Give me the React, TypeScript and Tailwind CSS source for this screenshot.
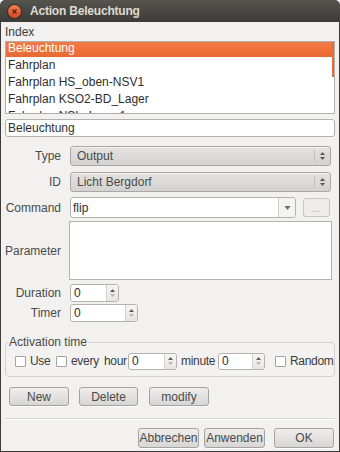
import React from "react";

const font = "font-['Liberation_Sans',Arial,sans-serif]";

function UpDown({ downDim = false }: { downDim?: boolean }) {
    return (
        <svg width="7" height="12" viewBox="0 0 7 12">
            <path d="M1 5 L3.5 2 L6 5 Z" fill="#5a5a5a" />
            <path d="M1 7 L3.5 10 L6 7 Z" fill={downDim ? "#b4b4b4" : "#5a5a5a"} />
        </svg>
    );
}

function Combo({ value }: { value: string }) {
    return (
        <div className="flex h-full items-stretch rounded-[3px] border border-[#a9a8a6] bg-gradient-to-b from-[#e4e3e1] to-[#d3d2d0] shadow-[inset_0_1px_0_#f2f2f1]">
            <div className="flex flex-1 items-center pl-[6px] text-[#4a4a48]">{value}</div>
            <div className="my-[3px] w-px bg-[#c2c1bf]" />
            <div className="flex w-[15px] items-center justify-center">
                <UpDown />
            </div>
        </div>
    );
}

function Spin({ width }: { width: string }) {
    return (
        <div className={`flex h-full ${width} shrink-0 items-stretch overflow-hidden rounded-[3px] border border-[#b3b2b0] bg-white`}>
            <div className="flex flex-1 items-center pl-[3px] text-[#2e2e2e]">0</div>
            <div className="flex w-[12px] items-center justify-center border-l border-[#d0cfcd] bg-gradient-to-b from-[#f6f6f5] to-[#e6e5e3]">
                <UpDown downDim />
            </div>
        </div>
    );
}

function Check({ label, w }: { label: string; w: string }) {
    return (
        <div className={`flex ${w} shrink-0 items-center whitespace-nowrap`}>
            <div className="h-[11px] w-[11px] shrink-0 rounded-[1px] border border-[#a3a2a0] bg-white" />
            <span className="ml-[4px]">{label}</span>
        </div>
    );
}

function Btn({ label, w }: { label: string; w: string }) {
    return (
        <div className={`flex h-full ${w} items-center justify-center rounded-[3px] border border-[#a4a3a1] bg-gradient-to-b from-[#efeeed] to-[#d7d6d4] text-[#4a4a48] shadow-[0_1px_0_#ffffff]`}>
            {label}
        </div>
    );
}

function Label({ text }: { text: string }) {
    return <div className="flex w-[56px] items-center justify-end whitespace-nowrap text-[#4a4a48]">{text}</div>;
}

export default function App() {
    const rows = ["Beleuchtung", "Fahrplan", "Fahrplan HS_oben-NSV1", "Fahrplan KSO2-BD_Lager", "Fahrplan NSL_Lager1"];

    return (
        <div className={`${font} flex h-[452px] w-[340px] flex-col overflow-hidden text-[12px] text-[#3c3c3c]`}>
            {/* title bar */}
            <div className="flex h-[22px] shrink-0 items-center rounded-t-[5px] bg-gradient-to-b from-[#55544f] to-[#3c3b37] pl-[8px]">
                <div className="flex h-[13px] w-[13px] items-center justify-center rounded-full bg-gradient-to-b from-[#f27f56] to-[#d6461d] shadow-[0_0_0_1px_#2f2e2a]">
                    <svg width="7" height="7" viewBox="0 0 7 7">
                        <path d="M1.5 1.5 L5.5 5.5 M5.5 1.5 L1.5 5.5" stroke="#5a2010" strokeWidth="1.3" />
                    </svg>
                </div>
                <span className="ml-[9px] text-[12px] font-bold tracking-[-0.2px] text-[#dfdbd2]">Action Beleuchtung</span>
            </div>

            {/* body */}
            <div className="flex flex-1 flex-col border-x border-b border-[#3c3b37] bg-[#f2f1f0] px-[4px]">
                <div className="mt-[3px] h-[14px] leading-[14px] text-[#3c3c3c]">Index</div>

                <div className="relative mt-[2px] h-[73px] shrink-0 overflow-hidden border border-[#b0afad] bg-white">
                    <div className="-mt-[2px]">
                        {rows.map((r, i) => (
                            <div
                                key={r}
                                className={`h-[17px] pl-[2px] leading-[17px] ${i === 0 ? "bg-gradient-to-b from-[#f37c4a] to-[#e9692f] text-white" : "text-[#2e2e2e]"}`}
                            >
                                {r}
                            </div>
                        ))}
                    </div>
                    <div className="absolute right-0 top-0 h-[35px] w-[2px] bg-[#ea6b35]" />
                </div>

                <div className="mt-[5px] flex h-[18px] shrink-0 items-center rounded-[3px] border border-[#b3b2b0] bg-white pl-[2px] text-[#2e2e2e]">
                    Beleuchtung
                </div>

                <div className="mt-[9px] flex h-[20px] gap-[9px]">
                    <Label text="Type" />
                    <div className="w-[261px]">
                        <Combo value="Output" />
                    </div>
                </div>
                <div className="mt-[6px] flex h-[20px] gap-[9px]">
                    <Label text="ID" />
                    <div className="w-[261px]">
                        <Combo value="Licht Bergdorf" />
                    </div>
                </div>
                <div className="mt-[5px] flex h-[21px] gap-[9px]">
                    <Label text="Command" />
                    <div className="flex w-[261px] gap-[7px]">
                        <div className="flex w-[226px] items-stretch rounded-[3px] border border-[#b3b2b0] bg-white">
                            <div className="flex flex-1 items-center pl-[2px] text-[#2e2e2e]">flip</div>
                            <div className="w-px bg-[#d0cfcd]" />
                            <div className="flex w-[16px] items-center justify-center rounded-r-[3px] bg-[#f3f3f2]">
                                <svg width="7" height="4" viewBox="0 0 7 4">
                                    <path d="M0.5 0 L6.5 0 L3.5 4 Z" fill="#6a6a6a" />
                                </svg>
                            </div>
                        </div>
                        <div className="my-[1px] flex w-[27px] items-end justify-center rounded-[3px] border border-[#c6c5c3] bg-[#eeedec] pb-[1px] text-[10px] leading-[12px] text-[#aaa9a7]">
                            ...
                        </div>
                    </div>
                </div>
                <div className="mt-[3px] flex h-[59px] gap-[8px]">
                    <Label text="Parameter" />
                    <div className="w-[263px] border border-[#b3b2b0] bg-white" />
                </div>
                <div className="mt-[4px] flex h-[18px] gap-[9px]">
                    <Label text="Duration" />
                    <Spin width="w-[49px]" />
                </div>
                <div className="mt-[2px] flex h-[18px] gap-[9px]">
                    <Label text="Timer" />
                    <Spin width="w-[68px]" />
                </div>

                {/* group box */}
                <div className="relative mt-[20px] h-[35px] shrink-0 rounded-[4px] border border-[#d3d2d0] bg-[#f3f2f1]">
                    <span className="absolute -top-[8px] left-[2px] bg-[#f2f1f0] px-[1px] leading-[14px] text-[#4a4a48]">
                        Activation time
                    </span>
                    <div className="flex h-full items-center pl-[9px] pt-[3px] tracking-[-0.3px] text-[#3c3c3c]">
                        <Check label="Use" w="w-[41px]" />
                        <Check label="every" w="w-[48px]" />
                        <span className="w-[24px] shrink-0 whitespace-nowrap">hour</span>
                        <div className="h-[17px]">
                            <Spin width="w-[49px]" />
                        </div>
                        <span className="w-[41px] shrink-0 whitespace-nowrap pl-[4px]">minute</span>
                        <div className="h-[17px]">
                            <Spin width="w-[47px]" />
                        </div>
                        <div className="ml-[10px]">
                            <Check label="Random" w="w-[56px]" />
                        </div>
                    </div>
                </div>

                <div className="mt-[10px] flex h-[19px] pl-[4px]">
                    <Btn label="New" w="w-[60px]" />
                    <div className="ml-[10px] h-full">
                        <Btn label="Delete" w="w-[59px]" />
                    </div>
                    <div className="ml-[11px] h-full">
                        <Btn label="modify" w="w-[60px]" />
                    </div>
                </div>

                <div className="mt-[12px] h-px bg-[#d6d5d3] shadow-[0_1px_0_#ffffff]" />

                <div className="mt-[9px] flex h-[20px] justify-end pr-[1px]">
                    <Btn label="Abbrechen" w="w-[61px]" />
                    <div className="ml-[5px] h-full">
                        <Btn label="Anwenden" w="w-[61px]" />
                    </div>
                    <div className="ml-[9px] h-full">
                        <Btn label="OK" w="w-[60px]" />
                    </div>
                </div>
            </div>
        </div>
    );
}
